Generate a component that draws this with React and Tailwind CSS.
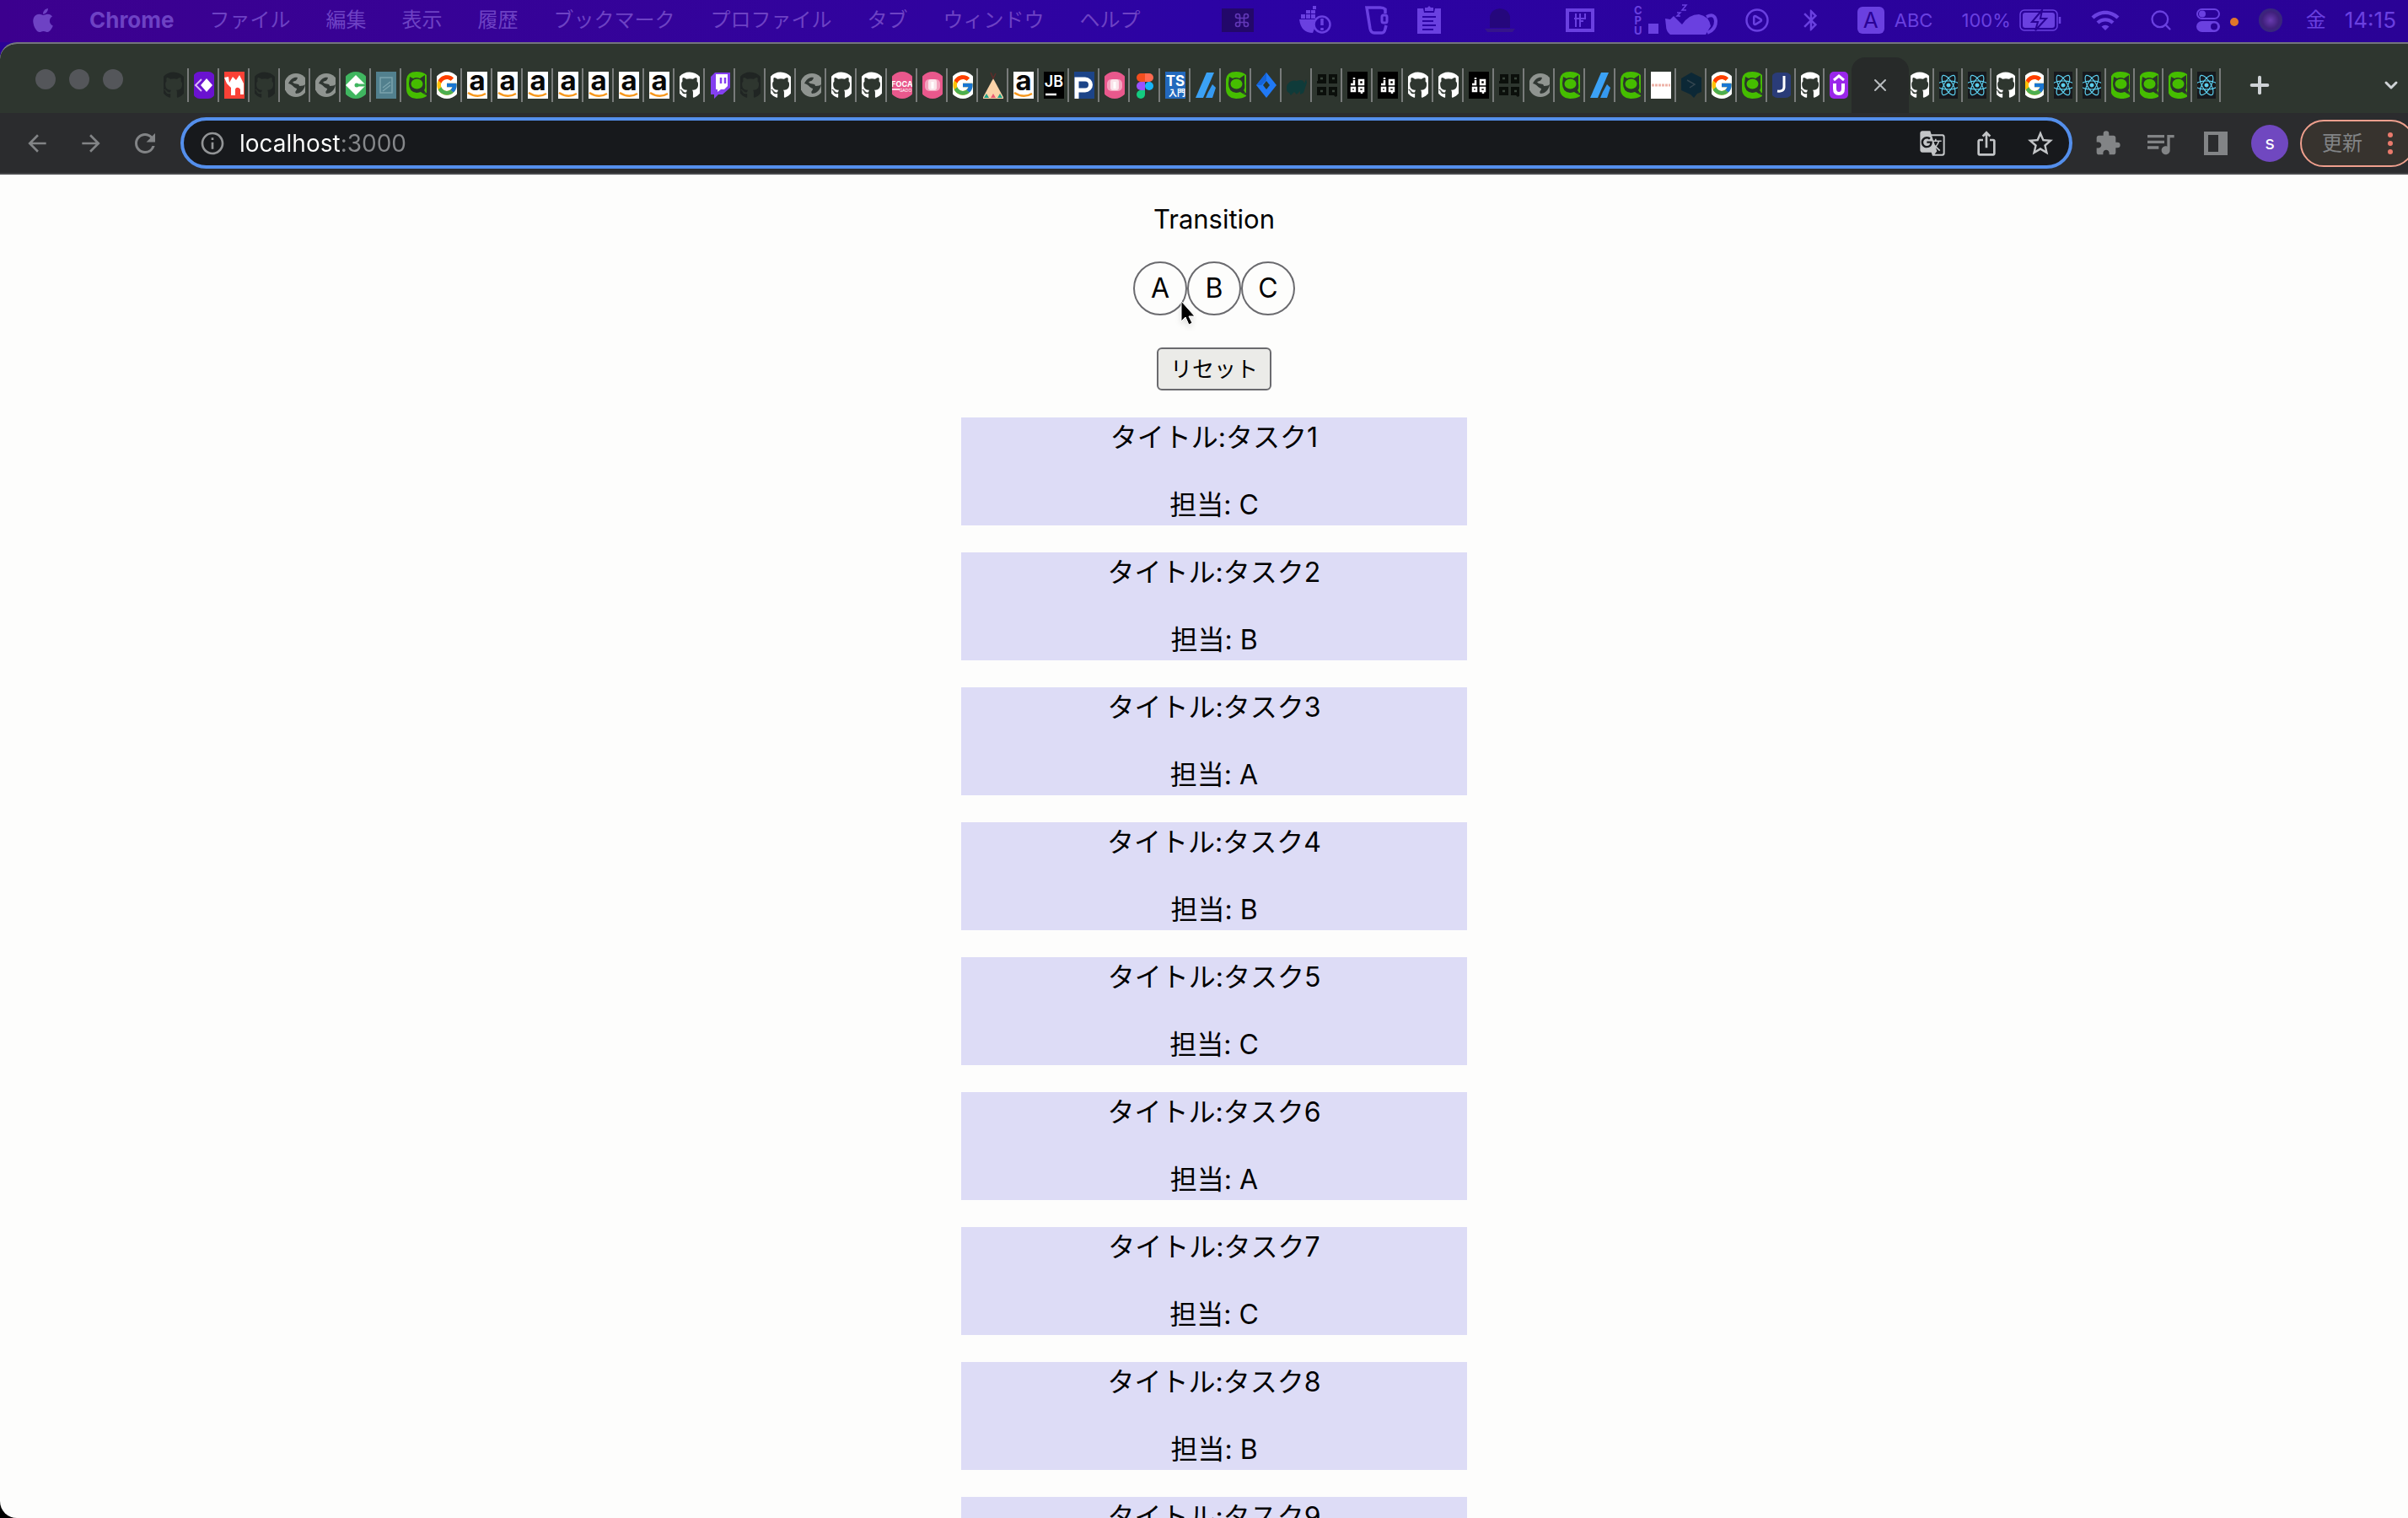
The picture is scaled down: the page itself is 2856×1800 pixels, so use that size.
import React, { useState } from "react";
import { FaApple, FaGithub, FaReact } from "react-icons/fa";
import { FcGoogle } from "react-icons/fc";
import {
  MdArrowBack,
  MdArrowForward,
  MdRefresh,
  MdInfoOutline,
  MdGTranslate,
  MdOutlineIosShare,
  MdStarBorder,
  MdExtension,
  MdQueueMusic,
  MdBluetooth,
  MdWifi,
} from "react-icons/md";
import { Command, Plus, X, ChevronDown, Search, CirclePlay } from "lucide-react";

const menus = ["ファイル", "編集", "表示", "履歴", "ブックマーク", "プロファイル", "タブ", "ウィンドウ", "ヘルプ"];

const leftTabs = [
  "githubDark", "diamond", "camel", "githubDark", "globe", "globe", "feedly", "slate", "cat", "google",
  "amazon", "amazon", "amazon", "amazon", "amazon", "amazon", "amazon", "github", "twitch", "githubDark",
  "github", "globe", "github", "github", "foca", "pink", "google", "tent", "amazon", "jetbrains",
  "paypay", "pink", "figma", "typescript", "azure", "cat", "jira", "elephant", "jooqDark", "jooq",
  "jooq", "github", "github", "jooq", "jooqDark", "globe", "cat", "azure", "cat", "note",
  "hexagon", "google", "cat",
];

const narrowTabs = ["jest", "github", "udemy"];

const rightTabs = ["github", "react", "react", "github", "google", "react", "react", "cat", "cat", "cat", "react"];

const members = ["A", "B", "C"];

const tasks = [
  { id: 1, title: "タスク1", person: "C" },
  { id: 2, title: "タスク2", person: "B" },
  { id: 3, title: "タスク3", person: "A" },
  { id: 4, title: "タスク4", person: "B" },
  { id: 5, title: "タスク5", person: "C" },
  { id: 6, title: "タスク6", person: "A" },
  { id: 7, title: "タスク7", person: "C" },
  { id: 8, title: "タスク8", person: "B" },
  { id: 9, title: "タスク9", person: "A" },
];

// 32px icon, its sides are cropped when the tab is narrower
const Svg = ({ children }) => (
  <svg viewBox="0 0 32 32" preserveAspectRatio="xMidYMid slice" className="w-full h-8">
    {children}
  </svg>
);

// same size, but lettering may reach over the edge
const LetterSvg = ({ children }) => (
  <svg viewBox="4 0 24 32" className="w-full h-8 overflow-visible">
    {children}
  </svg>
);

const Crop = ({ children }) => (
  <span className="w-full h-8 flex items-center justify-center overflow-hidden">{children}</span>
);

const Jooq = ({ fill }) => (
  <g fill="none" stroke={fill} strokeWidth="2.5">
    <path d="M12 10v5H8M18 10h5v5h-5zM9 19h4v4H9zM18 19h5v4h-5zM21 23v3" />
    <path d="M12 7v2" />
  </g>
);

const favicons = {
  github: (
    <Crop>
      <FaGithub className="w-8 h-8 shrink-0 text-white" />
    </Crop>
  ),
  githubDark: (
    <Crop>
      <FaGithub className="w-8 h-8 shrink-0 text-[#202523]" />
    </Crop>
  ),
  google: (
    <Crop>
      <span className="w-8 h-8 shrink-0 rounded-full bg-white flex items-center justify-center">
        <FcGoogle className="w-7 h-7" />
      </span>
    </Crop>
  ),
  react: (
    <Crop>
      <span className="w-8 h-8 shrink-0 bg-[#17191d] flex items-center justify-center">
        <FaReact className="w-7 h-7 text-[#5ccfee]" />
      </span>
    </Crop>
  ),
  twitch: (
    <Svg>
      <path d="M5 6l5-5h18v18l-9 8h-5l-5 5v-5H5z" fill="#8440f0" />
      <path d="M11 3h14v14l-4 4h-4l-4 3v-3h-2z" fill="#fff" />
      <path d="M17 7v7M22 7v7" stroke="#8440f0" strokeWidth="2.5" />
    </Svg>
  ),
  diamond: (
    <Svg>
      <rect x="3" width="26" height="32" rx="8" fill="#6a12d0" />
      <path d="M19 8l7 8-7 8-7-8z" fill="#fff" />
      <path d="M13 9l-7 7 7 7" fill="none" stroke="#d9b8f5" strokeWidth="2" />
    </Svg>
  ),
  camel: (
    <Svg>
      <rect width="32" height="32" fill="#fa4136" />
      <path d="M4 7l5-1 1 7 4-7 4 4 4-6 5 10v13h-4v-6c-2-3-5-3-6 0v7h-5v-9l-5-5z" fill="#fff" />
    </Svg>
  ),
  globe: (
    <Svg>
      <circle cx="17" cy="16" r="14" fill="#8f9490" />
      <path d="M8 14c3-6 7-8 11-7-1 4-3 4-6 5 2 4 8 1 8 5 4 0 6-1 7-2-1 8-7 11-11 11-2-3 1-3 1-6-4-1-5-5-10-6z" fill="#303733" />
    </Svg>
  ),
  feedly: (
    <Svg>
      <circle cx="16" cy="16" r="16" fill="#40b660" />
      <path d="M16 4l12 12-12 12L4 16z" fill="#fff" />
      <path d="M17 16h12" stroke="#40b660" strokeWidth="3" />
      <circle cx="17" cy="16" r="2.5" fill="#40b660" />
    </Svg>
  ),
  slate: (
    <Svg>
      <rect width="32" height="32" fill="#52808e" />
      <path d="M9 7h14v18H9zM12 19l9-7M12 23l9-7" fill="none" stroke="#7ba3ad" strokeWidth="1.5" />
    </Svg>
  ),
  cat: (
    <Svg>
      <path d="M16 0q8 0 12 4v21l-4 1 4 2v1q-4 3-12 3Q4 31 4 20V9q1-9 12-9z" fill="#45bd00" />
      <path d="M8 6l4 2q4-2 8 0l6-4v10q1 5-1 8l2 3-3 1-3-2q-3 1-5 1Q7 24 7 14z" fill="#2a352b" />
      <ellipse cx="16.5" cy="14.5" rx="7" ry="6" fill="#45bd00" />
    </Svg>
  ),
  amazon: (
    <LetterSvg>
      <rect x="4" width="24" height="32" fill="#fff" />
      <text x="16" y="22" textAnchor="middle" fontSize="33" fontWeight="700" fill="#080808">a</text>
      <path d="M5 25q11 7 21 1" fill="none" stroke="#f7981d" strokeWidth="2.5" />
    </LetterSvg>
  ),
  foca: (
    <Svg>
      <circle cx="16" cy="16" r="16" fill="#e9588c" />
      <text x="16" y="18" textAnchor="middle" fontSize="9" fontWeight="700" fill="#fff">FOCA</text>
      <path d="M4 21h9" stroke="#fff" strokeWidth="1.5" />
      <text x="20" y="24" textAnchor="middle" fontSize="5" fill="#fff">GADO</text>
    </Svg>
  ),
  pink: (
    <Svg>
      <circle cx="16" cy="16" r="16" fill="#e9588c" />
      <rect x="7" y="9" width="18" height="14" rx="5" fill="#f3a2bd" />
      <rect x="11" y="9" width="10" height="13" rx="3" fill="#fae3ea" />
      <path d="M16 12v8" stroke="#fff" strokeWidth="3" />
    </Svg>
  ),
  tent: (
    <Svg>
      <path d="M16 8l13 24H3z" fill="#fbd3a8" />
      <path d="M13 1l3 7 3-6" fill="none" stroke="#5d2d2a" strokeWidth="1.5" />
      <path d="M5 31l3-5 3 5zM21 31l3-5 3 5z" fill="#1fa58a" />
      <path d="M13 31l3-5 3 5z" fill="#ea5c74" />
    </Svg>
  ),
  jetbrains: (
    <LetterSvg>
      <rect x="4" width="24" height="32" fill="#000" />
      <text x="16" y="18" textAnchor="middle" fontSize="18" fontWeight="600" fill="#fff">JB</text>
      <path d="M6 27h13" stroke="#fff" strokeWidth="2.5" />
    </LetterSvg>
  ),
  paypay: (
    <Svg>
      <rect width="32" height="32" fill="#1c4488" />
      <path d="M7 32V9h10a6 6 0 0 1 0 13H9" fill="none" stroke="#fff" strokeWidth="5" />
    </Svg>
  ),
  figma: (
    <Svg>
      <path d="M16 2h-5a5 5 0 0 0 0 10h5z" fill="#f24e1e" />
      <path d="M16 2h5a5 5 0 0 1 0 10h-5z" fill="#ff6a50" />
      <path d="M16 12h-5a5 5 0 0 0 0 10h5z" fill="#9a52ff" />
      <circle cx="21" cy="17" r="5" fill="#18b4fa" />
      <path d="M16 22h-5a5 5 0 1 0 5 5z" fill="#14cc80" />
    </Svg>
  ),
  typescript: (
    <LetterSvg>
      <rect x="4" width="24" height="32" fill="#2369bd" />
      <text x="16" y="17" textAnchor="middle" fontSize="17" fontWeight="700" fill="#fff">TS</text>
      <text x="18" y="29" textAnchor="middle" fontSize="10" fontWeight="700" fill="#fff">入門</text>
    </LetterSvg>
  ),
  azure: (
    <Svg>
      <path d="M17 1h9L13 31H4z" fill="#3ba2f6" />
      <path d="M24 15l4 4-4 12h-8l3-7z" fill="#3599f0" />
    </Svg>
  ),
  jira: (
    <Svg>
      <path d="M16 1l12 15-12 15L4 16z" fill="#2079f5" />
      <path d="M16 1v9l-6 6-6 0z" fill="#1463d8" />
      <path d="M16 11l4 5-4 5-4-5z" fill="#29372f" />
    </Svg>
  ),
  elephant: (
    <Svg>
      <path d="M4 17q4-8 12-6 8-3 9 3l2-5 1 4-2 6-2 6-4 2v-4l-4 4-3-3-4 4-2-3q-4-1-3-8z" fill="#0f3b3a" />
    </Svg>
  ),
  jooq: (
    <Svg>
      <rect width="32" height="32" fill="#000" />
      <Jooq fill="#fff" />
    </Svg>
  ),
  jooqDark: (
    <Svg>
      <path d="M5 3h10v11H4v-3h1zM18 3h11v11H18zM4 18h11v10H4zM18 18h11v10l-3 2-2-2h-6z" fill="#0b0f0b" />
      <path d="M8 8h3M22 8h3M8 23h3M22 23h3" stroke="#39443b" strokeWidth="2.5" />
    </Svg>
  ),
  note: (
    <Svg>
      <rect width="32" height="32" fill="#fff" />
      <path d="M5 16h22" stroke="#eeb3a8" strokeWidth="3" strokeDasharray="3 1" />
    </Svg>
  ),
  hexagon: (
    <Svg>
      <path d="M16 1l12 6v17l-5 2-4 5-4-4-11-5V8z" fill="#0c2836" />
      <path d="M11 10l9 5-6 4" fill="none" stroke="#33454f" strokeWidth="1.5" />
    </Svg>
  ),
  jest: (
    <Svg>
      <rect x="4" y="1" width="24" height="30" rx="7" fill="#2a3c78" />
      <path d="M19 5v13q0 6-8 5" fill="none" stroke="#fff" strokeWidth="3" />
    </Svg>
  ),
  udemy: (
    <Svg>
      <rect x="5" width="22" height="32" rx="5" fill="#9a26ea" />
      <path d="M10 10l6-5 6 5" fill="none" stroke="#fff" strokeWidth="3" />
      <path d="M11 14v6q0 6 5 6t5-6v-6" fill="none" stroke="#fff" strokeWidth="4" />
    </Svg>
  ),
};

const Tab = ({ name, narrow, last }) => (
  <button aria-label={name} className={narrow ? "w-[34px] flex items-center shrink-0" : "w-9 flex items-center shrink-0"}>
    <span className={narrow ? "w-[22px] h-8" : "w-6 h-8"}>{favicons[name]}</span>
    {!last && <span className="w-0.5 h-10 ml-1 bg-[#787b7a]" />}
  </button>
);

const MenuBar = () => (
  <header className="h-[50px] shrink-0 flex items-center justify-between pb-0.5 pl-[38px] pr-3.5 bg-linear-to-r from-[#3c008e] via-[#2c03a4] to-[#2a0296] text-[#6e42c4] text-2xl leading-8 whitespace-nowrap">
    <nav className="flex items-center gap-[42px]">
      <FaApple className="w-[26px] h-8" />
      <span className="text-[26px] font-bold">Chrome</span>
      {menus.map((menu) => (
        <button key={menu}>{menu}</button>
      ))}
    </nav>

    <div className="flex items-center text-[#6a40e0]">
      <span className="w-[38px] h-7 bg-[#23086a] flex items-center justify-end pr-1 text-[#6238b8]">
        <Command className="w-5 h-5" />
      </span>
      {/* docker */}
      <svg viewBox="0 0 40 36" className="ml-[52px] w-10 h-9">
        <path d="M2 17h22l-6 16q-14 0-16-16z" fill="currentColor" />
        <path d="M4 11h5v5H4zM10 11h5v5h-5zM16 11h5v5h-5zM10 6h5v4h-5zM16 6h5v4h-5zM18 1h4v4h-4z" fill="currentColor" />
        <circle cx="29" cy="23" r="9.5" fill="#2c03a4" stroke="currentColor" strokeWidth="2.5" />
        <path d="M29 16v8M29 27v3" stroke="currentColor" strokeWidth="3.5" />
      </svg>
      {/* mug */}
      <svg viewBox="0 0 28 34" className="ml-10 w-7 h-[34px]">
        <path d="M24 9V4q-2-2-6-2H2l4 25q1 5 5 5h9q3 0 4-5l1-4" fill="none" stroke="currentColor" strokeWidth="3.5" />
        <rect x="20" y="11" width="6" height="9" rx="2" fill="none" stroke="currentColor" strokeWidth="3" />
      </svg>
      {/* clipboard */}
      <svg viewBox="0 0 28 34" className="ml-[34px] w-7 h-[34px]">
        <path d="M0 3h7l1 5h12l1-5h7v30H0z" fill="currentColor" />
        <path d="M9 2h3l2-2 2 2h3v4H9z" fill="currentColor" />
        <path d="M6 13h16M6 18h13M6 23h16M6 28h13" stroke="#2c03a4" strokeWidth="2" />
      </svg>
      {/* bell */}
      <svg viewBox="0 0 36 30" className="ml-[52px] w-9 h-[30px]">
        <path d="M6 24V10q2-8 12-9 10 1 12 9v14z" fill="#25077c" />
        <path d="M0 25h36l-3 4H3z" fill="#35158a" />
      </svg>
      <svg viewBox="0 0 34 28" className="ml-[60px] w-[34px] h-7">
        <rect x="2" y="2" width="30" height="24" fill="none" stroke="currentColor" strokeWidth="4" />
        <path d="M12 6v16M10 12h13V6M17 6v16M17 15h4" fill="none" stroke="currentColor" strokeWidth="2" />
      </svg>
      <span className="ml-12 w-2 flex flex-col items-center text-[13px] leading-3 font-bold">
        <span>C</span>
        <span>P</span>
        <span>U</span>
      </span>
      <span className="ml-2 mt-5 w-3 h-3 bg-[#6a40e0]" />
      {/* sleeping cat */}
      <svg viewBox="0 0 62 38" className="ml-2 w-[62px] h-[38px]">
        <path d="M0 17l6 1 4-4 10 10q8-12 20-12 12 2 14 14l-6 10H6Q1 32 1 26z" fill="currentColor" />
        <path d="M49 15q10-5 11 5 0 10-10 14" fill="none" stroke="currentColor" strokeWidth="4" />
        <path d="M14 10h4l-4 4h4M20 1h5l-5 6h5" fill="none" stroke="currentColor" strokeWidth="1.5" />
      </svg>
      <CirclePlay className="ml-8 w-[30px] h-[30px]" />
      <MdBluetooth className="ml-[34px] w-[30px] h-[30px]" />
      <span className="ml-10 w-8 h-8 rounded-md bg-[#6a40e0] text-[#2a0296] flex items-center justify-center text-[26px]">A</span>
      <span className="ml-3 text-[22px]">ABC</span>
      <span className="ml-[34px] text-[22px]">100%</span>
      <svg viewBox="0 0 50 26" className="ml-2.5 w-[50px] h-[26px]">
        <rect x="1" y="1" width="44" height="24" rx="5" fill="none" stroke="currentColor" strokeWidth="1.5" />
        <rect x="4" y="4" width="38" height="18" rx="3" fill="currentColor" />
        <path d="M27 1L15 15h7l-3 10 13-14h-7z" fill="currentColor" stroke="#2a0296" strokeWidth="2" />
        <path d="M48 9v8" stroke="currentColor" strokeWidth="2.5" />
      </svg>
      <MdWifi className="ml-[34px] w-9 h-9" />
      <Search className="ml-[34px] w-7 h-7" />
      <svg viewBox="0 0 28 28" className="ml-7 w-7 h-7">
        <rect x="1" y="1" width="26" height="11" rx="5.5" fill="none" stroke="currentColor" strokeWidth="2" />
        <circle cx="7" cy="6.5" r="4" fill="currentColor" />
        <rect y="15" width="28" height="13" rx="6.5" fill="currentColor" />
        <circle cx="21" cy="21.5" r="4" fill="#2a0296" />
      </svg>
      <span className="ml-3 mt-1 w-2.5 h-2.5 rounded-full bg-[#e0762a]" />
      <span className="ml-6 w-7 h-7 rounded-full bg-radial from-[#6a3cb0] via-[#40207c] to-[#22307c]" />
      <span className="ml-7">金</span>
      <span className="ml-[22px] text-[26px]">14:15</span>
    </div>
  </header>
);

const TabStrip = () => (
  <div className="h-[82px] shrink-0 flex items-center bg-[#2e362f] pt-4 pl-[42px] pr-2">
    <div className="flex gap-4 mr-12 -mt-3.5">
      <span className="w-6 h-6 rounded-full bg-[#54565a]" />
      <span className="w-6 h-6 rounded-full bg-[#54565a]" />
      <span className="w-6 h-6 rounded-full bg-[#54565a]" />
    </div>
    {leftTabs.map((name, idx) => (
      <Tab key={idx} name={name} />
    ))}
    {narrowTabs.map((name, idx) => (
      <Tab key={idx} name={name} narrow last={idx === narrowTabs.length - 1} />
    ))}
    <div className="self-end -ml-2 mr-0.5 w-[68px] h-[66px] shrink-0 rounded-t-2xl bg-[#272a29] flex items-center justify-center text-[#b9bdc0]">
      <button aria-label="close tab">
        <X className="w-6 h-6" />
      </button>
    </div>
    {rightTabs.map((name, idx) => (
      <Tab key={idx} name={name} narrow />
    ))}
    <button aria-label="new tab" className="ml-6 text-[#cfd3d6]">
      <Plus className="w-8 h-8" strokeWidth={3} />
    </button>
    <button aria-label="search tabs" className="ml-auto text-[#cfd3d6]">
      <ChevronDown className="w-6 h-6" strokeWidth={3} />
    </button>
  </div>
);

const Toolbar = () => {
  const [url, setUrl] = useState("localhost:3000");

  return (
    <div className="h-[73px] shrink-0 flex items-center bg-[#2b2c2e] border-b-2 border-[#47484a] pl-7 text-[#828486] overflow-hidden">
      <button aria-label="back">
        <MdArrowBack className="w-8 h-8" />
      </button>
      <button aria-label="forward" className="ml-8">
        <MdArrowForward className="w-8 h-8" />
      </button>
      <button aria-label="reload" className="ml-[30px]">
        <MdRefresh className="w-9 h-9" />
      </button>

      <div className="flex-1 ml-6 h-[61px] flex items-center rounded-full border-4 border-[#548fec] bg-[#17191c] pl-[18px] pr-4 text-[#c3c5c7]">
        <MdInfoOutline className="w-8 h-8 text-[#929496]" />
        <input
          aria-label="address"
          value={url}
          onChange={(e) => setUrl(e.target.value)}
          className="flex-1 ml-4 text-[28px] leading-9 outline-none text-transparent bg-clip-text bg-linear-to-r from-white from-[119px] to-[#85878a] to-[119px]"
        />
        <button aria-label="translate">
          <MdGTranslate className="w-8 h-8" />
        </button>
        <button aria-label="share" className="ml-8">
          <MdOutlineIosShare className="w-8 h-8" />
        </button>
        <button aria-label="bookmark" className="ml-[30px]">
          <MdStarBorder className="w-9 h-9" />
        </button>
      </div>

      <MdExtension className="ml-[26px] w-8 h-8" />
      <MdQueueMusic className="ml-[26px] w-10 h-10" />
      <svg viewBox="0 0 28 28" className="ml-8 w-7 h-7">
        <path d="M0 0h28v28H0zM5 4v20h12V4z" fill="currentColor" fillRule="evenodd" />
      </svg>
      <span className="ml-7 w-11 h-11 rounded-full bg-[#7048c0] text-white text-[22px] flex items-center justify-center">s</span>
      <button className="ml-3.5 -mr-2 w-[136px] h-14 rounded-full border-2 border-[#ee9f8d] bg-[#37332e] flex items-center justify-between pl-6 pr-6 text-2xl">
        更新
        <span className="flex flex-col gap-1">
          <span className="w-1.5 h-1.5 rounded-full bg-[#ea7a6c]" />
          <span className="w-1.5 h-1.5 rounded-full bg-[#ea7a6c]" />
          <span className="w-1.5 h-1.5 rounded-full bg-[#ea7a6c]" />
        </span>
      </button>
    </div>
  );
};

const App = () => {
  const [person, setPerson] = useState("");

  const displayedTasks = person ? tasks.filter((task) => task.person === person) : tasks;

  return (
    <div className="h-screen flex flex-col overflow-hidden bg-black font-['Inter','Noto_Sans_CJK_JP',sans-serif]">
      <MenuBar />
      <div className="flex-1 min-h-0 flex flex-col bg-linear-to-b from-[#2a0296] from-50% to-black to-50%">
        <div className="flex-1 min-h-0 flex flex-col rounded-l-[20px] overflow-hidden border-t-2 border-[#74757c] bg-[#fdfdfc]">
          <TabStrip />
          <Toolbar />

          <main className="flex-1 min-h-0 overflow-hidden flex flex-col items-center pl-6 pt-[33px] text-[32px] text-black">
            <h1 className="text-[31px] leading-10">Transition</h1>

            <div className="relative flex mt-[30px]">
              {members.map((member) => (
                <button
                  key={member}
                  onClick={() => setPerson(member)}
                  className="w-16 h-16 rounded-full border-2 border-[#6a6a6e] flex items-center justify-center"
                >
                  {member}
                </button>
              ))}
              {/* mouse pointer */}
              <svg viewBox="0 0 18 30" className="absolute left-14 top-[46px] w-[18px] h-[30px] drop-shadow-md">
                <path d="M1 1v24l5-5 4 9 4-2-4-8h7z" fill="#000" stroke="#fff" strokeWidth="1" />
              </svg>
            </div>

            <button
              onClick={() => setPerson("")}
              className="mt-[38px] h-[51px] px-3.5 shrink-0 rounded-md border-2 border-[#6a6a6e] bg-[#ebebe8] text-[26px] leading-8"
            >
              リセット
            </button>

            <ul className="mt-8 flex flex-col gap-8">
              {displayedTasks.map((task) => (
                <li key={task.id} className="w-[600px] flex flex-col gap-8 bg-[#dddcf6] text-center leading-[48px]">
                  <p>タイトル:{task.title}</p>
                  <p>担当: {task.person}</p>
                </li>
              ))}
            </ul>
          </main>
        </div>
      </div>
    </div>
  );
};

export default App;
